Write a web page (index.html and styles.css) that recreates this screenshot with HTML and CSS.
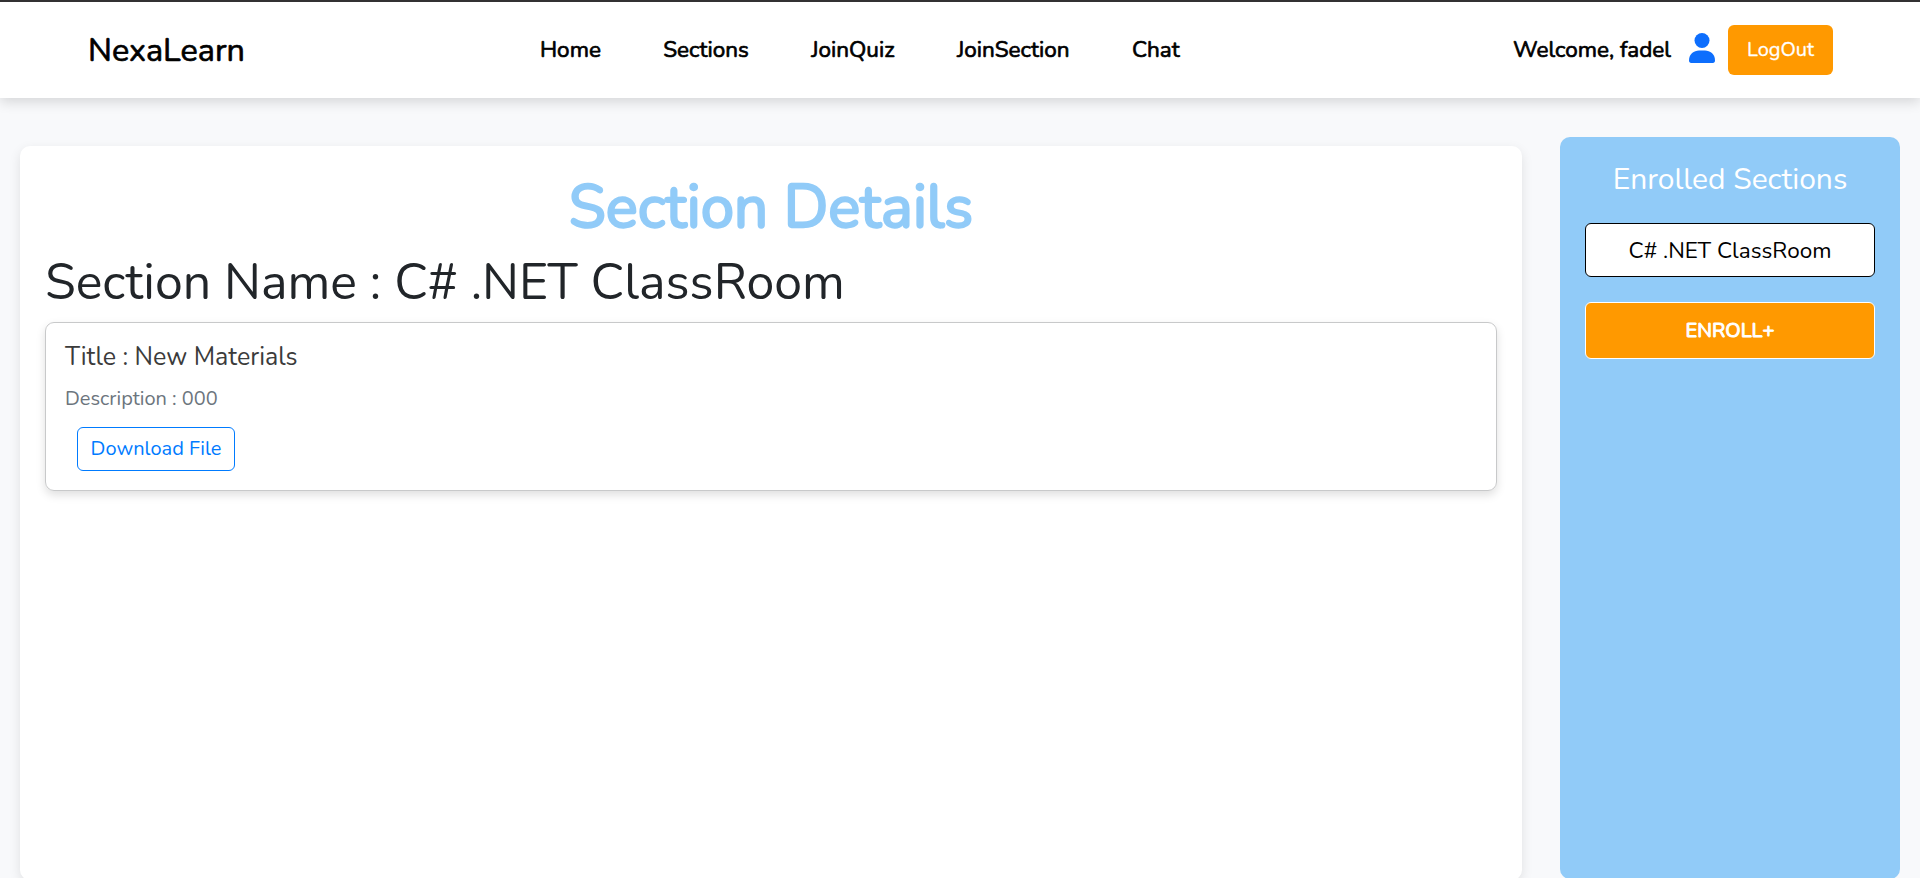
FILE: index.html
```html
<!DOCTYPE html>
<html lang="en">
<head>
<meta charset="utf-8">
<title>NexaLearn</title>
<link rel="stylesheet" href="styles.css">
</head>
<body>
<header class="navbar">
  <a class="brand">NexaLearn</a>
  <nav class="links">
    <a>Home</a><a>Sections</a><a>JoinQuiz</a><a>JoinSection</a><a>Chat</a>
  </nav>
  <div class="account">
    <span class="welcome">Welcome, fadel</span>
    <svg class="user" viewBox="0 0 26 30"><circle cx="13" cy="7.5" r="7.5"/><path d="M0 27.5C0 21 5 17.6 10 17.6h6c5 0 10 3.4 10 9.9 0 1.6-.8 2.5-2.2 2.5H2.2C.8 30 0 29.1 0 27.5z"/></svg>
    <button class="logout">LogOut</button>
  </div>
</header>
<div class="layout">
  <main class="panel">
    <h1 class="heading">Section Details</h1>
    <h2 class="name">Section Name : C# .NET ClassRoom</h2>
    <article class="material">
      <h5 class="title">Title : New Materials</h5>
      <p class="desc">Description : 000</p>
      <a class="download">Download File</a>
    </article>
  </main>
  <aside class="sidebar">
    <h3 class="side-title">Enrolled Sections</h3>
    <a class="room">C# .NET ClassRoom</a>
    <button class="enroll">ENROLL+</button>
  </aside>
</div>
</body>
</html>
```
FILE: styles.css
```css
* { box-sizing: border-box; }
body { margin: 0; height: 878px; overflow: hidden; background: #f8f9fb; color: #212529; font-family: Nunito, Lato, "Open Sans", sans-serif; font-weight: 400; }
h1, h2, h3, h5, p { margin: 0; font-weight: 400; }
button { font-family: inherit; padding: 0; border: 0; }
.navbar { position: relative; display: flex; align-items: center; height: 98px; border-top: 2px solid #333132; background: #fff; color: #000; padding: 0 87px 0 88px; box-shadow: 0 4px 12px rgba(0,0,0,.14); -webkit-text-stroke: .7px #000; }
.brand { width: 452px; font-size: 32.4px; line-height: 40px; }
.links { display: flex; gap: 62.4px; font-size: 22.5px; line-height: 30px; flex: 1; }
.account { display: flex; align-items: center; }
.welcome { font-size: 22.5px; line-height: 30px; margin-right: 18px; }
.user { width: 26px; height: 30px; margin: 0 13px 4px 0; fill: #0d6efd; stroke: none; }
.logout { width: 105px; height: 50px; border-radius: 6px; background: #ff9900; color: #fff; font-size: 20px; font-weight: 400; padding-bottom: 1px; -webkit-text-stroke: .3px #fff; }
.layout { display: flex; align-items: flex-start; padding: 39px 20px 0; }
.panel { width: 1502px; height: 734px; margin: 9px 38px 0 0; padding: 24px 25px; border-radius: 10px; background: #fff; box-shadow: 0 4px 12px rgba(0,0,0,.1); }
.heading { height: 72px; line-height: 74px; font-size: 60px; color: #91cbf8; text-align: center; -webkit-text-stroke: 2.3px #91cbf8; }
.name { height: 80px; line-height: 81px; font-size: 50px; white-space: nowrap; }
.material { height: 169px; padding: 18px 19px; border: 1px solid #c8c9ca; border-radius: 9px; box-shadow: 0 4px 10px rgba(0,0,0,.13); display: flex; flex-direction: column; align-items: flex-start; }
.title { font-size: 25px; line-height: 32px; color: #3b3b3b; }
.desc { font-size: 20px; line-height: 28px; margin-top: 12px; color: #6c757d; }
.download { display: flex; align-items: center; justify-content: center; width: 158px; height: 44px; margin: 14px 0 0 12px; padding-bottom: 2px; border: 1px solid #007bff; border-radius: 6px; font-size: 20px; color: #007bff; }
.sidebar { width: 340px; height: 742px; padding: 22px 25px 20px; border-radius: 10px; background: #91cbf8; text-align: center; }
.side-title { height: 64px; line-height: 42px; font-size: 30px; color: #fff; }
.room { display: flex; align-items: center; justify-content: center; height: 54px; border: 1px solid #000; border-radius: 6px; background: #fff; color: #000; font-size: 22.5px; }
.enroll { width: 100%; height: 57px; margin-top: 25px; padding-bottom: 1px; border: 1px solid #fff; border-radius: 6px; background: #ff9900; color: #fff; font-size: 20px; -webkit-text-stroke: 1px #fff; }
```
